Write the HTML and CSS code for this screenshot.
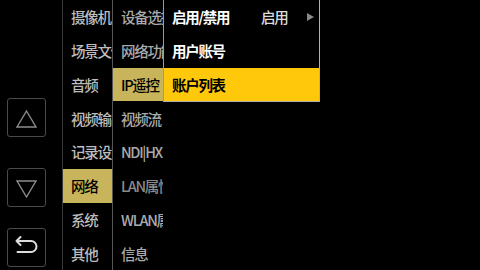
FILE: index.html
```html
<!DOCTYPE html>
<html lang="zh">
<head>
<meta charset="utf-8">
<link rel="stylesheet" href="styles.css">
</head>
<body>
<div class="screen">
  <div class="side">
    <div class="btn btn-up">
      <svg width="37" height="37" viewBox="0 0 37 37"><polygon points="18.5,12 9,28 28,28" fill="none" stroke="#8c8c8c" stroke-width="1.4" stroke-linejoin="miter"/></svg>
    </div>
    <div class="btn btn-down">
      <svg width="37" height="37" viewBox="0 0 37 37"><polygon points="9,12 28,12 18.5,28" fill="none" stroke="#8c8c8c" stroke-width="1.4"/></svg>
    </div>
    <div class="btn btn-back">
      <svg width="37" height="37" viewBox="0 0 37 37"><path d="M8.5 12 H23 A5.5 5.5 0 0 1 23 23 H9.5 M12.5 8 L8.5 12 L12.5 16" fill="none" stroke="#dcdcdc" stroke-width="2" stroke-linecap="round" stroke-linejoin="round"/></svg>
    </div>
  </div>
  <div class="col col-main">
    <div class="item">摄像机</div>
    <div class="item">场景文件</div>
    <div class="item">音频</div>
    <div class="item">视频输出</div>
    <div class="item">记录设置</div>
    <div class="item sel">网络</div>
    <div class="item">系统</div>
    <div class="item">其他</div>
  </div>
  <div class="col col-sub">
    <div class="item">设备选择</div>
    <div class="item">网络功能</div>
    <div class="item sel">IP遥控</div>
    <div class="item">视频流</div>
    <div class="item">NDI|HX</div>
    <div class="item dim">LAN属性</div>
    <div class="item">WLAN属性</div>
    <div class="item">信息</div>
  </div>
  <div class="popup">
    <div class="pitem"><span class="plabel">启用/禁用</span><span class="pval">启用</span><span class="parrow"></span></div>
    <div class="pitem"><span class="plabel">用户账号</span></div>
    <div class="pitem active"><span class="plabel">账户列表</span></div>
  </div>
</div>
</body>
</html>
```
FILE: styles.css
```css
html, body {
  margin: 0;
  padding: 0;
  background: #000;
}
.screen {
  position: relative;
  width: 480px;
  height: 270px;
  overflow: hidden;
  display: flex;
  font-family: "Noto Sans CJK SC", "Noto Sans", sans-serif;
  font-size: 14.5px;
  font-weight: 500;
  letter-spacing: -1.3px;
  background: #000;
}
.side {
  width: 63px;
  border-right: 1px solid #3a3a3a;
  display: flex;
  flex-direction: column;
  align-items: flex-start;
  padding-top: 98px;
  padding-left: 7px;
  box-sizing: border-box;
}
.btn {
  width: 39px;
  height: 39px;
  box-sizing: border-box;
  border: 1px solid #4a4a4a;
  border-radius: 3px;
}
.btn svg { display: block; }
.btn-down { margin-top: 31px; }
.btn-back { margin-top: 21px; }
.col {
  display: grid;
  grid-template-rows: repeat(8, 1fr);
  height: 270px;
  overflow: hidden;
}
.col-main {
  width: 49px;
  border-right: 1px solid #555;
}
.col-sub {
  width: 50px;
}
.item {
  display: flex;
  align-items: center;
  padding-left: 8px;
  white-space: nowrap;
  color: #bdbdbd;
  overflow: hidden;
}
.col-sub .item { color: #ababab; }
.col-sub .item.dim { color: #8a8a8a; }
.item.sel {
  background: #c8b45a;
  color: #000;
}
.col-sub .item.sel { color: #000; }
.popup {
  position: absolute;
  left: 163px;
  top: 0;
  width: 157px;
  box-sizing: border-box;
  border-left: 1px solid #9a9a9a;
  border-right: 1px solid #b0b0b0;
  border-bottom: 1px solid #b0b0b0;
  background: #000;
  display: grid;
  grid-template-rows: repeat(3, 33.75px);
}
.pitem {
  display: flex;
  align-items: center;
  padding-left: 8px;
  color: #fff;
  white-space: nowrap;
  font-weight: 700;
}
.plabel { width: 89px; }
.pval { color: #dcdcdc; font-weight: 500; }
.parrow {
  margin-left: auto;
  margin-right: 5px;
  width: 0;
  height: 0;
  border-top: 4px solid transparent;
  border-bottom: 4px solid transparent;
  border-left: 7px solid #8a8a8a;
}
.pitem.active {
  background: #ffc80b;
  color: #000;
}
```
